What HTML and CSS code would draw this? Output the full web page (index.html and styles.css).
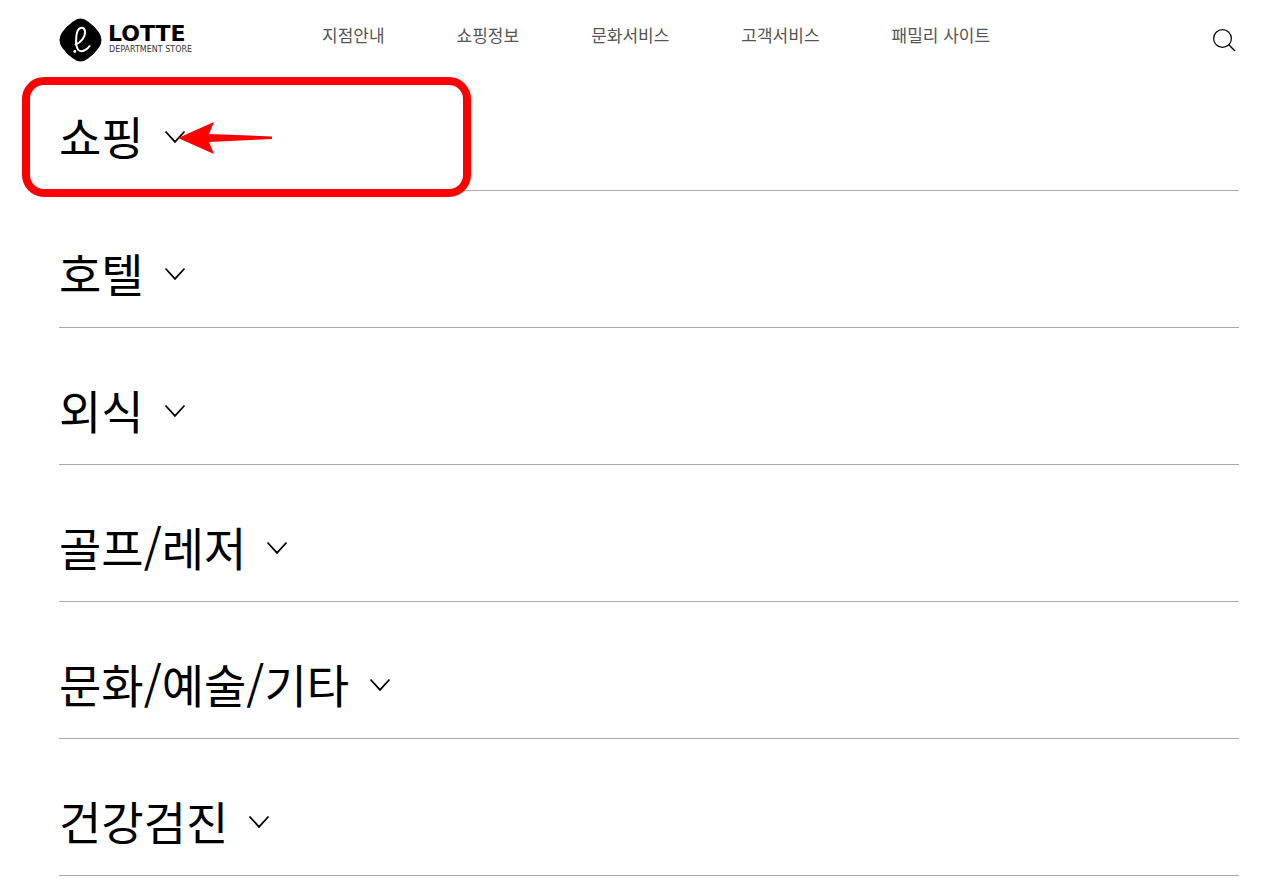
FILE: index.html
```
<!DOCTYPE html>
<html lang="ko">
<head>
  <meta charset="UTF-8">
  <meta name="viewport" content="width=device-width, initial-scale=1.0">
  <title>LOTTE DEPARTMENT STORE</title>
  <link rel="stylesheet" href="styles.css">
</head>
<body>
  <svg class="symbols" aria-hidden="true">
    <symbol id="chevron" viewBox="0 0 22 14">
      <path d="M1.500 1.500L11 11.800L20.500 1.500" fill="none" stroke="#000" stroke-width="1.800"/>
    </symbol>
  </svg>

  <header class="header">
    <a class="logo" href="#">
      <svg class="logo-mark" viewBox="0 0 43 44" aria-hidden="true">
        <path d="M14 3.500Q21.500 -2.500 29 3.500Q35.500 8 40 14.500Q45 22 40 29.500Q35.500 36 29 40.500Q21.500 46.500 14 40.500Q7.500 36 3 29.500Q-2 22 3 14.500Q7.500 8 14 3.500Z" fill="#000"/>
        <path d="M16.500 26.500C22 24.500 26.800 18.500 26 13C25.300 8.500 20.500 8.500 18.500 13C16.500 18 16.500 28 19 31.500C21.500 35 27.500 32.500 30.700 28" fill="none" stroke="#fff" stroke-width="2" stroke-linecap="round"/>
        <circle cx="15.800" cy="33.500" r="1.400" fill="#fff"/>
      </svg>
      <span class="logo-text">
        <span class="logo-name">LOTTE</span>
        <span class="logo-sub">DEPARTMENT STORE</span>
      </span>
    </a>
    <nav class="nav">
      <a href="#">지점안내</a>
      <a href="#">쇼핑정보</a>
      <a href="#">문화서비스</a>
      <a href="#">고객서비스</a>
      <a href="#">패밀리 사이트</a>
    </nav>
    <button class="search" type="button" aria-label="검색">
      <svg viewBox="0 0 24 24" aria-hidden="true">
        <circle cx="10.500" cy="10.500" r="8.900" fill="none" stroke="#000" stroke-width="1.200"/>
        <path d="M16.800 16.800L23 23" stroke="#000" stroke-width="1.400"/>
      </svg>
    </button>
  </header>

  <main class="categories">
    <section class="category">
      <h2><button type="button">쇼핑<svg class="chevron"><use href="#chevron"/></svg></button></h2>
      <div class="highlight"></div>
      <svg class="pointer" viewBox="0 0 96 34" aria-hidden="true">
        <path d="M0 17L36 1L31 13L94 15.500V18L31 21L36 33Z" fill="#f00"/>
      </svg>
    </section>
    <section class="category">
      <h2><button type="button">호텔<svg class="chevron"><use href="#chevron"/></svg></button></h2>
    </section>
    <section class="category">
      <h2><button type="button">외식<svg class="chevron"><use href="#chevron"/></svg></button></h2>
    </section>
    <section class="category">
      <h2><button type="button">골프/레저<svg class="chevron"><use href="#chevron"/></svg></button></h2>
    </section>
    <section class="category">
      <h2><button type="button">문화/예술/기타<svg class="chevron"><use href="#chevron"/></svg></button></h2>
    </section>
    <section class="category">
      <h2><button type="button">건강검진<svg class="chevron"><use href="#chevron"/></svg></button></h2>
    </section>
  </main>
</body>
</html>
```
FILE: styles.css
```
* {
  box-sizing: border-box;
}

body {
  margin: 0;
  padding: 0 22px 0 59px;
  background-color: #fff;
  color: #000;
  font-family: "Noto Sans CJK KR", sans-serif;
}

a {
  color: inherit;
  text-decoration: none;
}

button {
  padding: 0;
  border: none;
  background: none;
  color: inherit;
  font: inherit;
  cursor: pointer;
}

.symbols {
  display: none;
}

/* Header */
.header {
  display: flex;
  align-items: flex-start;
  padding-top: 18px;
}

.logo {
  display: flex;
  gap: 6px;
  width: 263px;
}

.logo-mark {
  width: 43px;
  height: 44px;
}

.logo-text {
  display: flex;
  flex-direction: column;
  padding-top: 5px;
  white-space: nowrap;
}

.logo-name {
  font-family: "DejaVu Sans", sans-serif;
  font-size: 22px;
  font-weight: bold;
  line-height: 22px;
}

.logo-sub {
  margin-left: 1px;
  color: #333;
  font-family: "DejaVu Sans", sans-serif;
  font-size: 8px;
  line-height: 10px;
}

.nav {
  display: flex;
  gap: 72px;
  padding-top: 5px;
  color: #555;
  font-size: 17px;
  line-height: 24px;
}

.search {
  margin: 10px 3px 0 auto;
}

.search svg {
  display: block;
  width: 24px;
  height: 24px;
}

/* Category list */
.categories {
  margin-top: -8px;
}

.category {
  position: relative;
  padding: 53px 0 27px;
  border-bottom: 1px solid #aaa;
}

.category h2 {
  margin: 0;
  font-size: 46px;
  font-weight: normal;
  line-height: 56px;
}

.category button {
  display: flex;
  align-items: center;
  gap: 20px;
}

.chevron {
  width: 22px;
  height: 14px;
  margin-top: 4px;
}

/* Marked category */
.highlight {
  position: absolute;
  top: 23px;
  left: -37px;
  width: 449px;
  height: 120px;
  border: 8px solid #f00;
  border-radius: 22px;
  pointer-events: none;
}

.pointer {
  position: absolute;
  top: 67px;
  left: 119px;
  width: 96px;
  height: 34px;
  pointer-events: none;
}
```
